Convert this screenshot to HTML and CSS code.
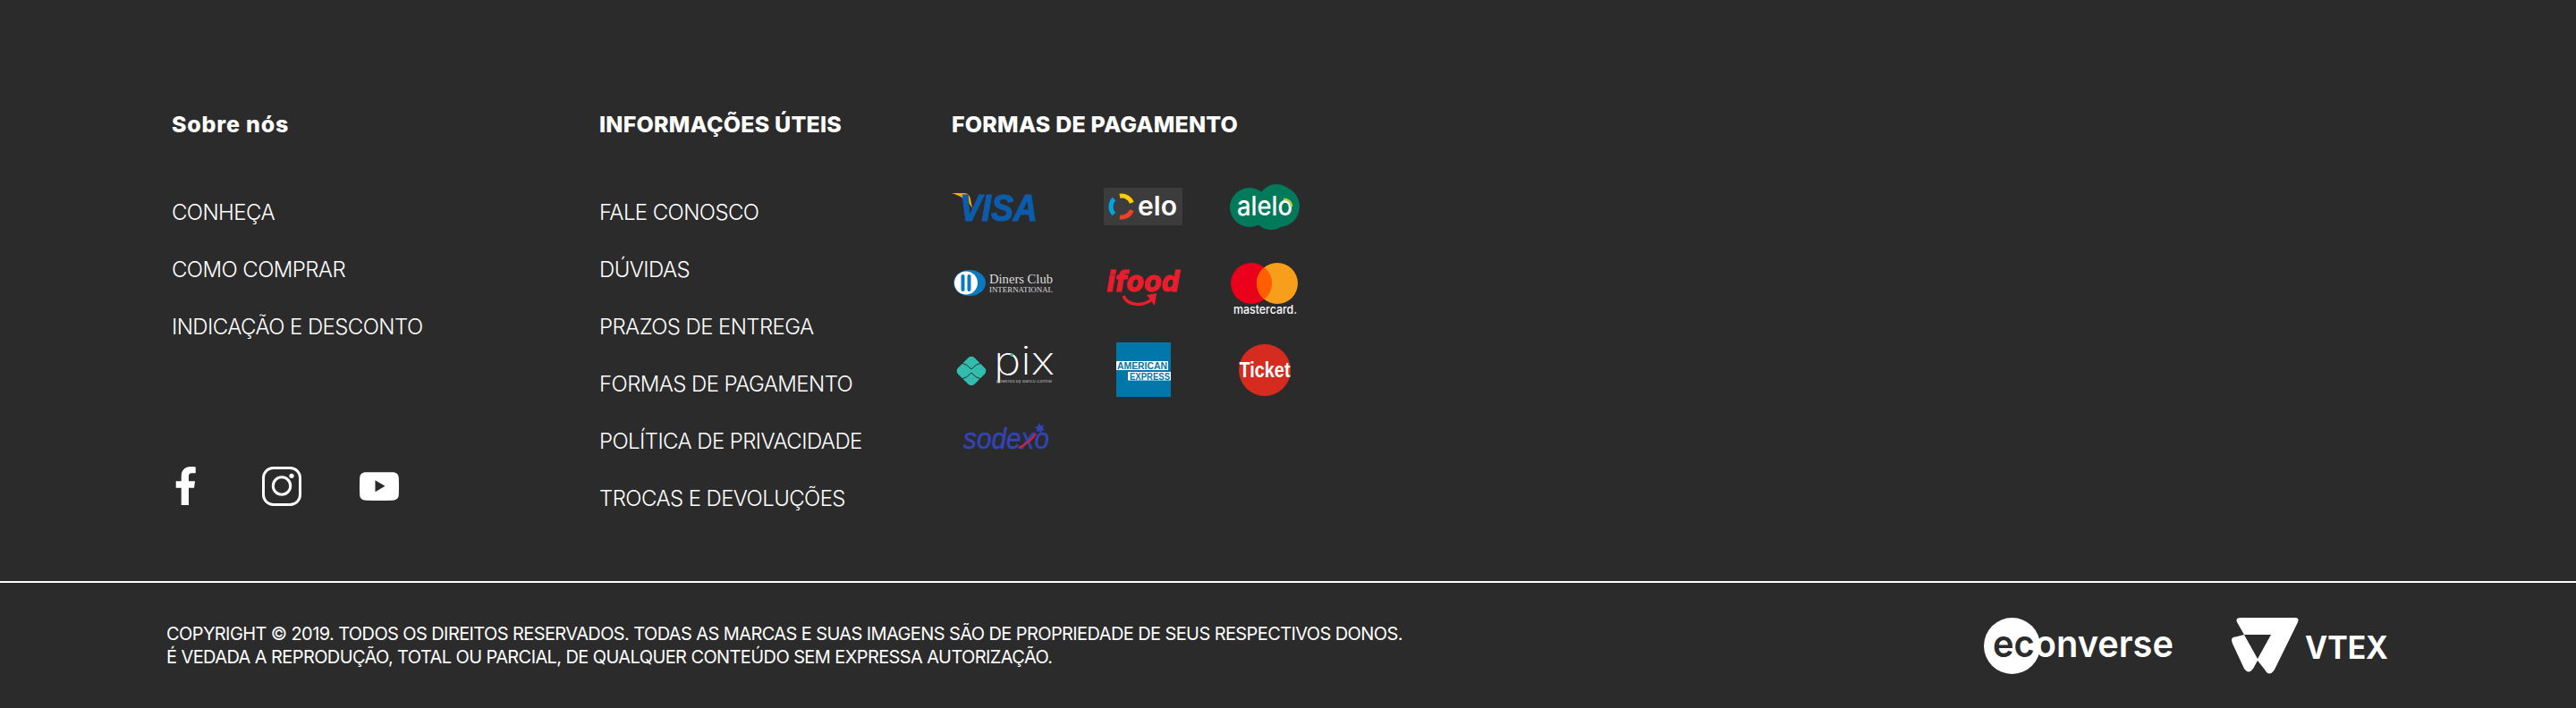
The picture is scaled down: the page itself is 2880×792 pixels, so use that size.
FILE: index.html
```html
<!doctype html>
<html lang="pt-BR">
 <head>
  <title>Rodapé</title>
  <meta name="viewport" content="width=device-width, initial-scale=1">
  <link rel="stylesheet" href="styles.css">
 </head>
 <body>
  <footer class="footer">
   <div class="footer-top">
    <section class="col col-about">
     <h3 class="col-title col-title-wide">Sobre nós</h3>
     <ul class="links">
      <li><a href="#">CONHEÇA</a></li>
      <li><a href="#">COMO COMPRAR</a></li>
      <li><a href="#">INDICAÇÃO E DESCONTO</a></li>
     </ul>
     <div class="social">
      <a href="#" aria-label="Facebook">
       <svg class="icon-fb" viewBox="0 0 36 44"><path fill="#fff" d="M10.7 43V23.7H4.7V16.3H10.7V11C10.7 4 14.5 0 21 0C23.5 0 25.5.2 26.7.4V7.3H22.5C19.8 7.3 19 8.5 19 10.8V16.3H26L25 23.7H19V43Z"/></svg>
      </a>
      <a href="#" aria-label="Instagram">
       <svg class="icon-ig" viewBox="0 0 44 44" fill="none" stroke="#fff" stroke-width="3">
        <rect x="1.5" y="1.5" width="41" height="41" rx="11"/>
        <circle cx="22" cy="21.5" r="9.7"/>
        <circle cx="33" cy="10.3" r="2.6" fill="#fff" stroke="none"/>
       </svg>
      </a>
      <a href="#" aria-label="YouTube">
       <svg class="icon-yt" viewBox="0 0 44 32"><path fill="#fff" fill-rule="evenodd" d="M7 .3H37C41 .3 43.6 2.5 43.8 6.5C44.1 12 44.1 20 43.8 25.5C43.6 29.5 41 31.6 37 31.7C27 32 17 32 7 31.7C3 31.6.4 29.5.2 25.5C-.1 20-.1 12 .2 6.5C.4 2.5 3 .3 7 .3ZM17.5 9.3V22.3L28.5 15.8Z"/></svg>
      </a>
     </div>
    </section>
    <section class="col col-info">
     <h3 class="col-title">INFORMAÇÕES ÚTEIS</h3>
     <ul class="links">
      <li><a href="#">FALE CONOSCO</a></li>
      <li><a href="#">DÚVIDAS</a></li>
      <li><a href="#">PRAZOS DE ENTREGA</a></li>
      <li><a href="#">FORMAS DE PAGAMENTO</a></li>
      <li><a href="#">POLÍTICA DE PRIVACIDADE</a></li>
      <li><a href="#">TROCAS E DEVOLUÇÕES</a></li>
     </ul>
    </section>
    <section class="col">
     <h3 class="col-title">FORMAS DE PAGAMENTO</h3>
     <div class="payments">
      <svg class="visa" width="96" height="31" viewBox="0 0 96 31">
       <path fill="#f5a81c" d="M0 0H14C18 0 20 3 21 6L23 17C18 8 10 3 0 0Z"/>
       <text class="logo-visa" x="9" y="31" textLength="87" lengthAdjust="spacingAndGlyphs">VISA</text>
      </svg>
      <svg width="88" height="42" viewBox="0 0 88 42">
       <rect width="88" height="42" fill="#3c3c3c"/>
       <g fill="none" stroke-width="5">
        <path stroke="#00a4e0" d="M11.5 12.5A12 12 0 0 0 11.5 29.5"/>
        <path stroke="#ffcb05" d="M17.9 9.2A12 12 0 0 1 31.3 16.9"/>
        <path stroke="#ef4123" d="M31.3 25.1A12 12 0 0 1 17.9 32.8"/>
       </g>
       <text class="logo-elo" x="38" y="31" textLength="44" lengthAdjust="spacingAndGlyphs">elo</text>
      </svg>
      <svg class="alelo" width="78" height="51" viewBox="0 0 78 51">
       <g fill="#007a5a">
        <circle cx="22" cy="26" r="22"/>
        <circle cx="55" cy="25" r="23"/>
        <circle cx="52" cy="20" r="20"/>
        <circle cx="46" cy="30" r="21"/>
       </g>
       <text class="logo-alelo" x="8" y="35" textLength="62" lengthAdjust="spacingAndGlyphs">alelo</text>
       <path fill="none" stroke="#b5cf3b" stroke-width="2.5" d="M60 17A8 8 0 0 1 69 25"/>
      </svg>

      <svg class="diners" width="112" height="29" viewBox="0 0 112 29">
       <ellipse cx="18" cy="14.5" rx="18" ry="14.5" fill="#0a79bf"/>
       <circle cx="14" cy="14.5" r="13" fill="#fff"/>
       <rect x="8.5" y="5" width="4" height="19" rx="2" fill="#0a79bf"/>
       <rect x="15.5" y="5" width="4" height="19" rx="2" fill="#0a79bf"/>
       <text class="logo-diners" x="40" y="15" textLength="71" lengthAdjust="spacingAndGlyphs">Diners Club</text>
       <text class="logo-diners-sub" x="40" y="25" textLength="71" lengthAdjust="spacingAndGlyphs">INTERNATIONAL</text>
      </svg>
      <svg width="82" height="44" viewBox="0 0 82 44">
       <text class="logo-ifood" x="0" y="25" textLength="82" lengthAdjust="spacingAndGlyphs">ifood</text>
       <path fill="none" stroke="#ea1d2c" stroke-width="3.5" d="M19 30C24 42 42 42 52 33"/>
       <path fill="#ea1d2c" d="M45 29L56 27L54 41Z"/>
      </svg>
      <svg class="mc" width="75" height="58" viewBox="0 0 75 58">
       <circle cx="23" cy="23" r="23" fill="#eb001b"/>
       <circle cx="52" cy="23" r="23" fill="#f79e1b"/>
       <path fill="#ff5f00" d="M37.500 5A23 23 0 0 1 37.500 41A23 23 0 0 1 37.500 5Z"/>
       <text class="logo-mc" x="3" y="57" textLength="71" lengthAdjust="spacingAndGlyphs">mastercard.</text>
      </svg>

      <svg class="pix" width="111" height="39" viewBox="0 0 111 39">
       <rect x="5" y="8" width="26" height="26" rx="5" fill="#32bcad" transform="rotate(45 18 21)"/>
       <path fill="none" stroke="#2b2b2b" stroke-width="1" d="M7 12Q13 13 18 19Q23 13 29 12M7 30Q13 29 18 23Q23 29 29 30"/>
       <text class="logo-pix" x="43" y="25" textLength="68" lengthAdjust="spacingAndGlyphs">pix</text>
       <circle cx="63" cy="3" r="1.800" fill="#32bcad"/>
       <text class="logo-pix-sub" x="46" y="34" textLength="62" lengthAdjust="spacingAndGlyphs">powered by Banco Central</text>
      </svg>
      <svg width="61" height="61" viewBox="0 0 61 61">
       <rect width="61" height="61" fill="#0077a8"/>
       <rect y="21" width="58" height="10" fill="#fff"/>
       <rect x="13" y="33" width="48" height="9.500" fill="#fff"/>
       <text class="logo-amex" x="1" y="30" textLength="56" lengthAdjust="spacingAndGlyphs">AMERICAN</text>
       <text class="logo-amex" x="15" y="41.500" textLength="45" lengthAdjust="spacingAndGlyphs">EXPRESS</text>
      </svg>
      <svg width="58" height="58" viewBox="0 0 58 58">
       <circle cx="29" cy="29" r="29" fill="#d62c1f"/>
       <text class="logo-ticket" x="0.500" y="37" textLength="57" lengthAdjust="spacingAndGlyphs">Ticket</text>
      </svg>

      <svg width="96" height="30" viewBox="0 0 96 30">
       <text class="logo-sodexo" x="0" y="29" textLength="96" lengthAdjust="spacingAndGlyphs">sodexo</text>
       <path fill="none" stroke="#e4202e" stroke-width="2" d="M62 28C70 24 77 19 81 12"/>
       <path fill="#3344b5" d="M85 0L86.500 3.500L90.500 2L88.500 5.500L91 8L87.500 8.500L87 12L84.500 9L81.500 10.500L82.500 7L79.500 5L83 4Z"/>
      </svg>
     </div>
    </section>
   </div>

   <div class="footer-bottom">
    <p class="copyright">
     COPYRIGHT © 2019. TODOS OS DIREITOS RESERVADOS. TODAS AS MARCAS E SUAS IMAGENS SÃO DE PROPRIEDADE DE SEUS RESPECTIVOS DONOS.<br>
     É VEDADA A REPRODUÇÃO, TOTAL OU PARCIAL, DE QUALQUER CONTEÚDO SEM EXPRESSA AUTORIZAÇÃO.
    </p>
    <div class="brands">
     <svg width="212" height="63" viewBox="0 0 212 63">
      <circle cx="31.500" cy="31.500" r="31.500" fill="#fff"/>
      <text class="logo-econverse" x="10" y="44" textLength="202" lengthAdjust="spacingAndGlyphs"><tspan fill="#2b2b2b">ec</tspan>onverse</text>
     </svg>
     <svg width="176" height="63" viewBox="0 0 176 63">
      <path fill="#fff" fill-rule="evenodd" d="M11 0H72Q77 0 75 5L49 58Q43 67 38 58L30 48L25 57Q20 64 15 57L2 29Q-1 22 5 21.500L15 19L7 5Q5 0 11 0ZM15 19H45L30 46Z"/>
      <text class="logo-vtex" x="83" y="46" textLength="93" lengthAdjust="spacingAndGlyphs">VTEX</text>
     </svg>
    </div>
   </div>
  </footer>
 </body>
</html>
```

FILE: styles.css
```css
* {
 box-sizing: border-box;
}
body {
 margin: 0;
 background-color: #2b2b2b;
 color: #fff;
 font-family: Inter, "Open Sans", sans-serif;
}
a {
 color: inherit;
 text-decoration: none;
}
svg {
 overflow: visible;
}
.footer {
 height: 792px;
 overflow: hidden;
}
.footer-top {
 display: flex;
 height: 650px;
 padding: 123px 0 61px 192px;
}
.col {
 display: flex;
 flex-direction: column;
}
.col-about {
 width: 478px;
}
.col-info {
 width: 394px;
}
.col-title {
 margin: 0;
 font-size: 25px;
 line-height: 32px;
 font-weight: 800;
 letter-spacing: 0.2px;
 white-space: nowrap;
}
.col-title-wide {
 letter-spacing: 0.8px;
}
.links {
 list-style: none;
 margin: 51px 0 0;
 padding: 0;
}
.links li {
 height: 64px;
 font-size: 24px;
 line-height: 64px;
 font-weight: 300;
 letter-spacing: -0.6px;
 white-space: nowrap;
}
.social {
 display: flex;
 align-items: center;
 gap: 65px;
 margin-top: auto;
 padding-bottom: 23px;
}
.social a {
 display: flex;
}
.icon-fb {
 width: 36px;
 height: 44px;
}
.icon-ig {
 width: 44px;
 height: 44px;
}
.icon-yt {
 width: 44px;
 height: 32px;
}
.payments {
 display: grid;
 grid-template-columns: 122px 184px 88px;
 grid-template-rows: 92px 92px 89px 60px;
 margin-top: 30px;
 place-items: center;
}
.payments .visa {
 justify-self: start;
}
.payments .diners {
 justify-self: start;
 margin: 0 0 13px 2px;
}
.payments .pix {
 justify-self: start;
 margin-left: 4px;
}
.payments .mc {
 margin-right: 2px;
}
.footer-bottom {
 display: flex;
 align-items: center;
 justify-content: space-between;
 height: 142px;
 padding: 0 210px 0 186px;
 border-top: 2px solid #fff;
}
.copyright {
 margin: 0;
 font-size: 20px;
 line-height: 26px;
 letter-spacing: -0.6px;
 white-space: nowrap;
}
.brands {
 display: flex;
 align-items: center;
 gap: 64px;
}

/* logo wordmarks */
.logo-visa {
 font: italic 700 42px "Liberation Sans", sans-serif;
 fill: #0b5cab;
 stroke: #0b5cab;
 stroke-width: 1.2px;
}
.logo-elo {
 font: 600 30px Inter, sans-serif;
 fill: #fff;
}
.logo-alelo {
 font: 500 30px Inter, sans-serif;
 fill: #fff;
}
.logo-diners {
 font: 400 15px "Liberation Serif", serif;
 fill: #ddd;
}
.logo-diners-sub {
 font: 400 9px "Liberation Serif", serif;
 fill: #ddd;
}
.logo-ifood {
 font: italic 700 32px "DejaVu Sans", sans-serif;
 fill: #ea1d2c;
 stroke: #ea1d2c;
 stroke-width: 1px;
}
.logo-mc {
 font: 500 13px Inter, sans-serif;
 fill: #fff;
}
.logo-pix {
 font: 200 44px Inter, sans-serif;
 fill: #fff;
}
.logo-pix-sub {
 font: 400 4px Inter, sans-serif;
 fill: #bbb;
}
.logo-amex {
 font: 700 11px "Liberation Sans", sans-serif;
 fill: #0077a8;
}
.logo-ticket {
 font: 700 24px "Liberation Sans", sans-serif;
 fill: #fff;
}
.logo-sodexo {
 font: italic 400 33px "Liberation Sans", sans-serif;
 fill: #3344b5;
 stroke: #3344b5;
 stroke-width: 0.5px;
}
.logo-econverse {
 font: 600 42px Inter, sans-serif;
 fill: #fff;
}
.logo-vtex {
 font: 700 35px Inter, sans-serif;
 fill: #fff;
}
```
